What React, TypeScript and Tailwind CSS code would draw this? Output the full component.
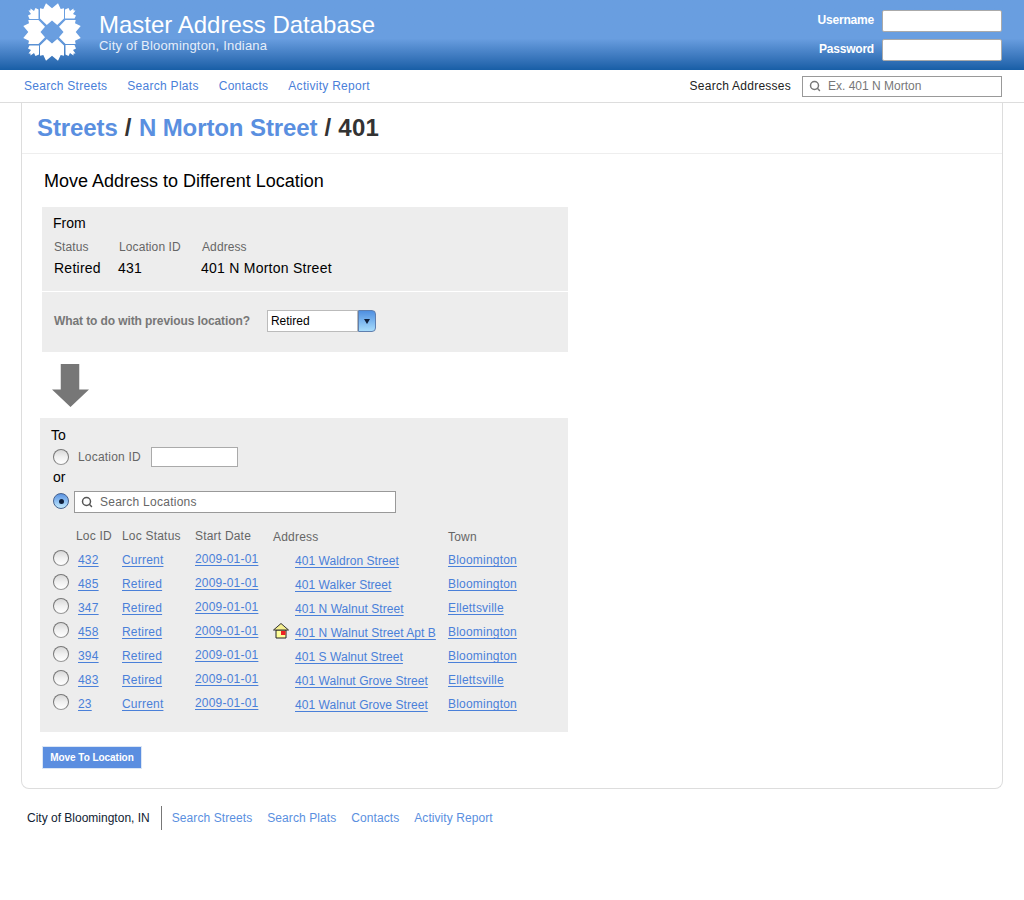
import type { ReactNode } from "react";
import { Search } from "lucide-react";

const navLinks = ["Search Streets", "Search Plats", "Contacts", "Activity Report"];

const rows = [
  { id: "432", status: "Current", address: "401 Waldron Street", town: "Bloomington" },
  { id: "485", status: "Retired", address: "401 Walker Street", town: "Bloomington" },
  { id: "347", status: "Retired", address: "401 N Walnut Street", town: "Ellettsville" },
  { id: "458", status: "Retired", address: "401 N Walnut Street Apt B", town: "Bloomington", home: true },
  { id: "394", status: "Retired", address: "401 S Walnut Street", town: "Bloomington" },
  { id: "483", status: "Retired", address: "401 Walnut Grove Street", town: "Ellettsville" },
  { id: "23", status: "Current", address: "401 Walnut Grove Street", town: "Bloomington" },
];

function Logo() {
  const big = "M18 6.3 L21.3 7 L24 1.3 L30 6.3 L36 1.3 L38.7 7 L42 6.3 L42 16.5 L35.2 23 L30 18.5 L24.8 23 L18 16.5 Z";
  const corner = "M16.5 17 L16.5 7.5 L13.5 6 L12 9 L8.5 6.5 L8.5 8.5 L6.5 8.5 L9 12 L6 13.5 L7.5 17 Z";
  return (
    <svg viewBox="0 0 60 60" className="h-[60px] w-[60px] shrink-0" fill="#fff">
      {[0, 90, 180, 270].map((r) => (
        <g key={r} transform={`rotate(${r} 30 30)`}>
          <path d={big} />
          <path d={corner} />
        </g>
      ))}
    </svg>
  );
}

function Radio({ checked }: { checked?: boolean }) {
  if (checked) {
    return (
      <span className="flex h-4 w-4 shrink-0 items-center justify-center rounded-full border border-[#44618f] bg-gradient-to-b from-[#5c93e0] via-[#8fc0f2] to-[#c4eafc]">
        <span className="h-[5px] w-[5px] rounded-full bg-[#10203c]" />
      </span>
    );
  }
  return (
    <span className="block h-4 w-4 shrink-0 rounded-full border-[1.5px] border-[#777] border-b-[#999] bg-gradient-to-b from-[#d8d8d8] via-[#f0f0f0] to-[#fff]" />
  );
}

function HomeIcon() {
  return (
    <svg viewBox="0 0 16 16" className="h-4 w-4">
      <path d="M3 7 H13 V15 H3 Z" fill="#ffff99" stroke="#222" strokeWidth="1" />
      <path d="M0.5 7 L8 0.5 L15.5 7 Z" fill="#f5ef90" stroke="#333" strokeWidth="1" strokeLinejoin="round" />
      <rect x="8" y="8" width="4.5" height="4" fill="#ee2222" />
    </svg>
  );
}

function RowLink({ children, tight }: { children: ReactNode; tight?: boolean }) {
  return (
    <a className={tight ? "text-[12px] leading-[15px] tracking-[0.05px] text-[#4a80d9] underline underline-offset-2" : "text-[12px] leading-[15px] tracking-[0.2px] text-[#4a80d9] underline underline-offset-2"}>
      {children}
    </a>
  );
}

export default function App() {
  return (
    <div className="h-[900px] bg-white font-['Liberation_Sans',Arial,sans-serif]">
      <header className="flex h-[70px] items-start bg-gradient-to-b from-[#699ee0] via-[#699ee0] via-55% to-[#175ea6] pl-[22px] pr-[22px]">
        <div className="mt-[2px]">
          <Logo />
        </div>
        <div className="ml-[17px] mt-[11px] text-white">
          <div className="text-[24px] leading-[28px]">Master Address Database</div>
          <div className="-mt-[1px] text-[13px] leading-[15px] tracking-[0.2px] text-[#e6eefa]">City of Bloomington, Indiana</div>
        </div>
        <div className="ml-auto mt-[10px] flex flex-col gap-[7px]">
          {["Username", "Password"].map((label) => (
            <label key={label} className="flex items-center justify-end gap-[8px] text-[12px] font-bold text-white">
              <span className="-mt-[2px] tracking-[-0.2px]">{label}</span>
              <input className="h-[22px] w-[120px] rounded-[2px] border border-[#aaa] bg-white" />
            </label>
          ))}
        </div>
      </header>

      <nav className="flex h-[33px] items-center border-b border-[#ddd] pl-[24px] pr-[22px]">
        <div className="flex gap-[20px] text-[12px] tracking-[0.28px] text-[#4a80d9]">
          {navLinks.map((l) => (
            <a key={l}>{l}</a>
          ))}
        </div>
        <span className="ml-auto text-[12px] tracking-[0.25px] text-[#222]">Search Addresses</span>
        <div className="ml-[11px] flex h-[21px] w-[200px] items-center gap-[7px] border border-[#999] bg-white px-[6px] text-[12px] text-[#777]">
          <Search size={12} strokeWidth={3} className="text-[#777]" />
          Ex. 401 N Morton
        </div>
      </nav>

      <main className="mx-[21px] h-[686px] rounded-b-[8px] border border-t-0 border-[#ddd]">
        <h1 className="flex h-[51px] items-center border-b border-[#eee] pl-[15px] text-[24px] font-bold text-[#333]">
          <a className="tracking-[-0.1px] text-[#5a8fe0]">Streets</a>
          <span className="whitespace-pre tracking-[0.4px]"> / </span>
          <a className="tracking-[-0.1px] text-[#5a8fe0]">N Morton Street</a>
          <span className="whitespace-pre tracking-[0.3px]"> / 401</span>
        </h1>

        <div className="pl-[20px]">
          <h2 className="ml-[2px] pt-[17px] text-[18px] leading-[21px] text-black">Move Address to Different Location</h2>

          <section className="mt-[15px] h-[84px] w-[526px] bg-[#ededed] pl-[11px] pt-[8px]">
            <div className="text-[14px] leading-[16px] text-black">From</div>
            <div className="ml-[1px] mt-[9px] flex text-[12px] leading-[14px] tracking-[0.1px] text-[#666]">
              <span className="w-[65px]">Status</span>
              <span className="w-[83px]">Location ID</span>
              <span>Address</span>
            </div>
            <div className="ml-[1px] mt-[6px] flex text-[14px] leading-[16px] tracking-[0.25px] text-black">
              <span className="w-[64px]">Retired</span>
              <span className="w-[83px]">431</span>
              <span>401 N Morton Street</span>
            </div>
          </section>
          <section className="mt-[1px] flex h-[60px] w-[526px] items-start bg-[#ededed] pl-[12px] pt-[18px]">
            <span className="mt-[4px] text-[12px] font-bold leading-[14px] tracking-[-0.1px] text-[#777]">What to do with previous location?</span>
            <div className="ml-[17px] flex h-[22px] w-[109px] items-stretch">
              <div className="w-[91px] border border-[#bbb] bg-white pl-[3px] text-[12px] leading-[20px] text-black">Retired</div>
              <div className="flex flex-1 items-center justify-center rounded-r-[4px] border border-[#5f7fae] bg-gradient-to-b from-[#4f8fe0] to-[#a8dcfb]">
                <span className="h-0 w-0 border-x-[3.5px] border-t-[5px] border-x-transparent border-t-[#10203c]" />
              </div>
            </div>
          </section>

          <svg viewBox="0 0 38 44" className="ml-[10px] mt-[12px] h-[43px] w-[37px]" fill="#777">
            <path d="M9 0 H28 V26 H38 L19 44 L0 26 H9 Z" />
          </svg>

          <section className="-ml-[2px] mt-[11px] h-[314px] w-[528px] bg-[#ededed] pl-[11px] pt-[10px]">
            <div className="text-[14px] leading-[15px] text-black">To</div>
            <div className="ml-[2px] mt-[4px] flex items-center">
              <Radio />
              <span className="ml-[9px] text-[12px] tracking-[0.2px] text-[#666]">Location ID</span>
              <input className="ml-[10px] h-[20px] w-[87px] border border-[#aaa] bg-white" />
            </div>
            <div className="ml-[2px] mt-[2px] text-[14px] leading-[16px] text-black">or</div>
            <div className="ml-[2px] mt-[6px] flex items-center">
              <div className="-mt-[2px]">
                <Radio checked />
              </div>
              <div className="ml-[5px] flex h-[22px] w-[322px] items-center gap-[7px] border border-[#999] bg-white px-[6px] text-[12px] tracking-[0.25px] text-[#666]">
                <Search size={12} strokeWidth={3} className="text-[#555]" />
                Search Locations
              </div>
            </div>

            <div className="mt-[16px] grid grid-cols-[25px_46px_73px_78px_175px_auto] text-[12px] leading-[14px] tracking-[0.2px] text-[#666]">
              <span />
              <span>Loc ID</span>
              <span>Loc Status</span>
              <span>Start Date</span>
              <span className="mt-[1px]">Address</span>
              <span className="mt-[1px]">Town</span>
            </div>

            <div className="mt-[3px]">
              {rows.map((row) => (
                <div key={row.id + row.address} className="grid h-[24px] grid-cols-[27px_44px_73px_78px_22px_153px_auto] items-start">
                  <div className="mt-[3px] ml-[2px]">
                    <Radio />
                  </div>
                  <div><RowLink>{row.id}</RowLink></div>
                  <div><RowLink>{row.status}</RowLink></div>
                  <div className="-mt-[1px]"><RowLink>2009-01-01</RowLink></div>
                  <div className="mt-[4px]">{row.home && <HomeIcon />}</div>
                  <div className="mt-[1px] whitespace-nowrap"><RowLink tight>{row.address}</RowLink></div>
                  <div><RowLink>{row.town}</RowLink></div>
                </div>
              ))}
            </div>
          </section>

          <button className="mt-[14px] h-[23px] w-[100px] border border-[#dbe6f5] bg-[#5b8ee0] text-[10px] font-bold tracking-[-0.05px] text-white">
            Move To Location
          </button>
        </div>
      </main>

      <footer className="ml-[27px] mt-[17px] flex h-[24px] items-center text-[12px]">
        <span className="text-[#123]">City of Bloomington, IN</span>
        <span className="ml-[11px] h-[24px] w-px bg-[#777]" />
        <div className="ml-[10px] flex gap-[15px] tracking-[0.08px] text-[#5a8fe0]">
          {navLinks.map((l) => (
            <a key={l}>{l}</a>
          ))}
        </div>
      </footer>
    </div>
  );
}
